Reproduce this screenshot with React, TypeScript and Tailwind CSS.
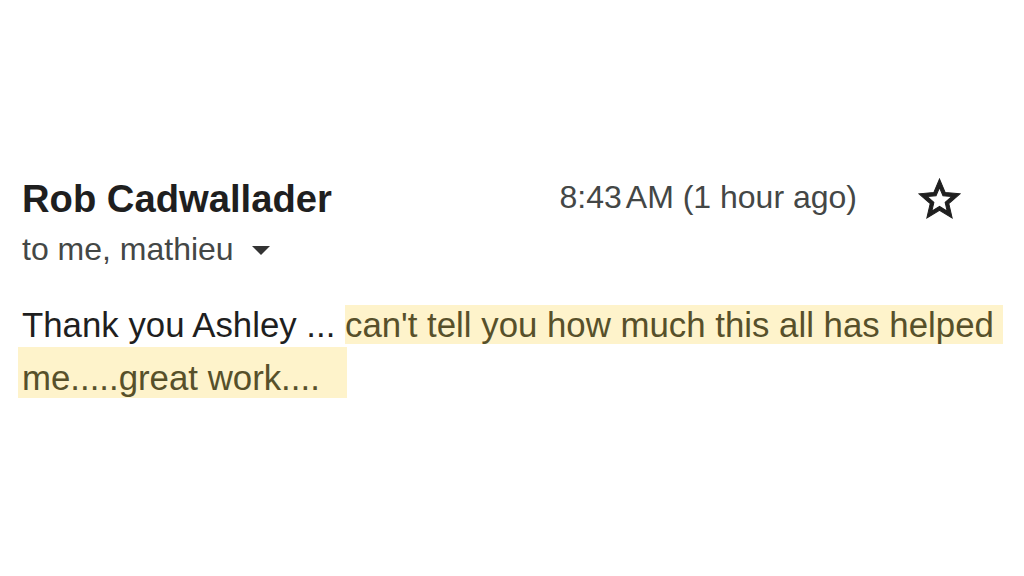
const StarOutline = () => (
  <svg viewBox="0 0 24 24" className="h-[49px] w-[49px] fill-[#1f1f1f] stroke-[#1f1f1f] stroke-[0.5]">
    <path d="M22 9.24l-7.19-.62L12 2 9.19 8.63 2 9.24l5.46 4.73L5.82 21 12 17.27 18.18 21l-1.63-7.03L22 9.24zM12 15.4l-3.76 2.27 1-4.28-3.32-2.88 4.38-.38L12 6.1l1.71 4.04 4.38.38-3.32 2.88 1 4.28L12 15.4z" />
  </svg>
);

const App = () => (
  <div className="min-h-screen bg-white pt-[177px] pl-[22px] font-['Liberation_Sans',Arial,sans-serif]">
    <div className="flex items-start pr-[60px]">
      <div className="flex-1">
        <h2 className="text-[38.2px] leading-[44px] font-bold text-[#1f1f1f]">Rob Cadwallader</h2>
        <div className="mt-[8px] flex items-center text-[32px] leading-[40px] text-[#444746]">
          <span>to me, mathieu</span>
          <svg viewBox="0 0 18 9" className="ml-[18px] mt-[3px] h-[9px] w-[18px] fill-[#333]">
            <path d="M0 0h18L9 9z" />
          </svg>
        </div>
      </div>
      <div className="text-[32px] leading-[40px] text-[#444746]">
        <span>8:43</span>
        <span className="ml-[4px]">AM (1 hour ago)</span>
      </div>
      <button className="ml-[58px] -mt-[2px]" aria-label="Star">
        <StarOutline />
      </button>
    </div>

    <div className="mt-[36px] text-[34.8px] text-[#1f1f1f]">
      <p className="leading-[40px] whitespace-nowrap">
        Thank you Ashley ...{" "}
        <span className="bg-[#fef3cb] pr-[9px] text-[#57502a]">can't tell you how much this all has helped</span>
      </p>
      <p className="mt-[2px] -ml-[4px] h-[51px] w-[329px] bg-[#fef3cb] pt-[11px] pl-[4px] leading-[40px] text-[#57502a]">
        me.....great work....
      </p>
    </div>
  </div>
);

export default App;
